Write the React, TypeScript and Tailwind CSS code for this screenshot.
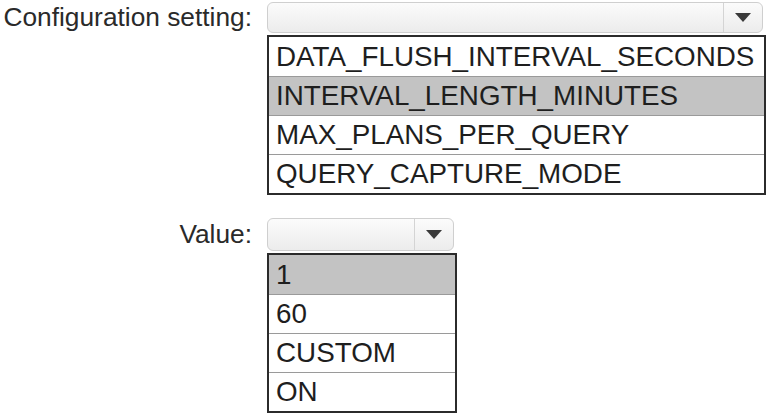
import React from "react";

function Arrow() {
  return (
    <svg width="16" height="9" viewBox="0 0 16 9" className="block">
      <polygon points="0,0 16,0 8,9" fill="#3a3a3a" />
    </svg>
  );
}

function Select({ width, height }: { width: string; height: string }) {
  return (
    <div
      className={`${width} ${height} flex rounded-[6px] border border-[#cfcfcf] bg-gradient-to-b from-[#fbfbfb] to-[#ececec]`}
    >
      <div className="flex-1" />
      <div className="w-[39px] border-l border-[#d4d4d4] flex items-center justify-center">
        <Arrow />
      </div>
    </div>
  );
}

function OptionList({
  width,
  items,
  selected,
}: {
  width: string;
  items: string[];
  selected: number;
}) {
  return (
    <div className={`${width} mt-[2px] border-2 border-[#2b2b2b] bg-white`}>
      {items.map((item, i) => (
        <div
          key={item}
          className={`h-[39px] flex items-center pl-[7px] text-[27.8px] whitespace-nowrap ${
            i > 0 ? "border-t border-[#9a9a9a]" : ""
          } ${i === selected ? "bg-[#c3c3c3]" : ""}`}
        >
          {item}
        </div>
      ))}
    </div>
  );
}

export default function App() {
  return (
    <div className="w-[767px] h-[413px] bg-white text-[#1e1e1e] font-['Liberation_Sans',Arial,sans-serif] overflow-hidden">
      {/* configuration setting */}
      <div className="flex pt-[2px]">
        <div className="w-[252px] h-[31px] text-right text-[26.3px] leading-[31px] text-[#2a2a2a] whitespace-nowrap">
          Configuration setting:
        </div>
        <div className="ml-[15px] flex flex-col">
          <Select width="w-[496px]" height="h-[31px]" />
          <OptionList
            width="w-[499px]"
            selected={1}
            items={[
              "DATA_FLUSH_INTERVAL_SECONDS",
              "INTERVAL_LENGTH_MINUTES",
              "MAX_PLANS_PER_QUERY",
              "QUERY_CAPTURE_MODE",
            ]}
          />
        </div>
      </div>

      {/* value */}
      <div className="flex mt-[23px]">
        <div className="w-[252px] h-[33px] text-right text-[26.3px] leading-[33px] text-[#2a2a2a]">
          Value:
        </div>
        <div className="ml-[15px] flex flex-col">
          <Select width="w-[187px]" height="h-[33px]" />
          <OptionList
            width="w-[190px]"
            selected={0}
            items={["1", "60", "CUSTOM", "ON"]}
          />
        </div>
      </div>
    </div>
  );
}
